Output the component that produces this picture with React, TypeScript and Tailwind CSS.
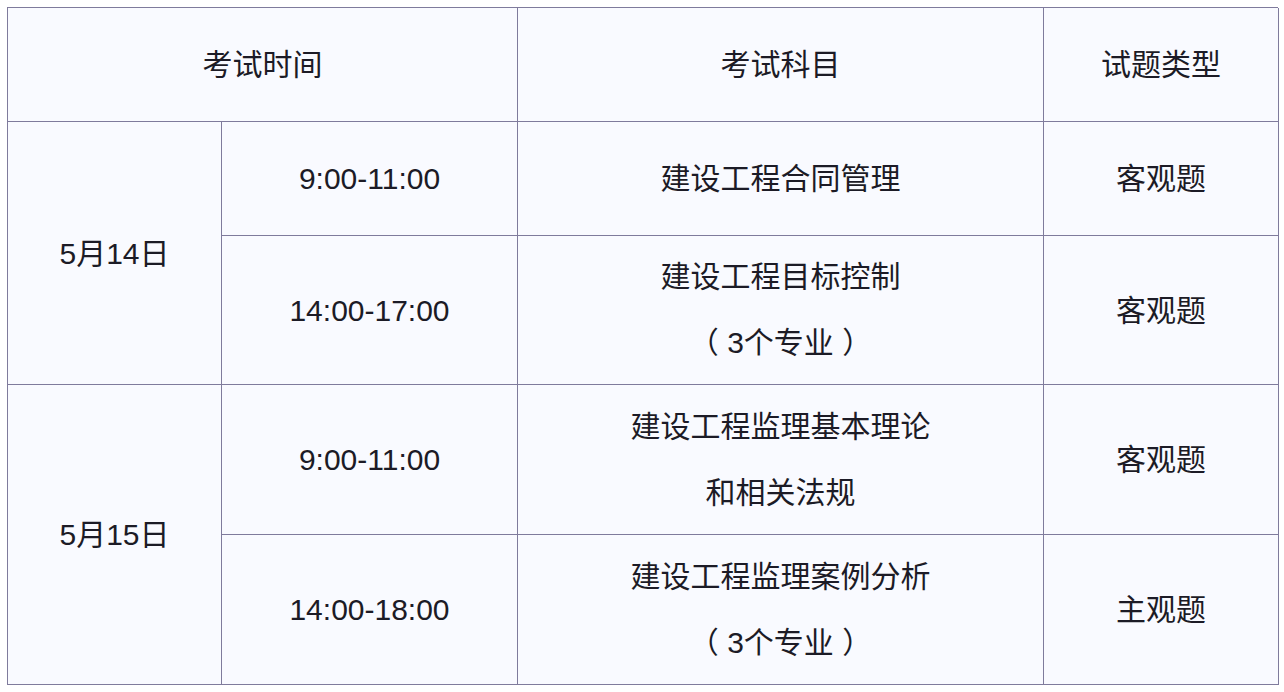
export default function App() {
  const cell =
    "flex flex-col items-center justify-center border-r border-b border-[#7f7b9c] text-center";
  return (
    <div
      lang="zh-CN"
      className="min-h-screen bg-white p-[7px] text-[30px] text-[#1c1b26]"
      style={{ fontFamily: '"Liberation Sans", "Noto Sans CJK SC", sans-serif' }}
    >
      <div className="grid w-[1271px] grid-cols-[214px_296px_526px_235px] grid-rows-[114px_114px_149px_150px_150px] border-l border-t border-[#7f7b9c] bg-[#f9faff]">
        <div className={`${cell} col-span-2`}>考试时间</div>
        <div className={cell}>考试科目</div>
        <div className={cell}>试题类型</div>

        <div className={`${cell} row-span-2`}>5月14日</div>
        <div className={cell}>9:00-11:00</div>
        <div className={cell}>建设工程合同管理</div>
        <div className={cell}>客观题</div>

        <div className={cell}>14:00-17:00</div>
        <div className={`${cell} leading-[66px]`}>
          <span>建设工程目标控制</span>
          <span>（ 3个专业 ）</span>
        </div>
        <div className={cell}>客观题</div>

        <div className={`${cell} row-span-2`}>5月15日</div>
        <div className={cell}>9:00-11:00</div>
        <div className={`${cell} leading-[66px]`}>
          <span>建设工程监理基本理论</span>
          <span>和相关法规</span>
        </div>
        <div className={cell}>客观题</div>

        <div className={cell}>14:00-18:00</div>
        <div className={`${cell} leading-[66px]`}>
          <span>建设工程监理案例分析</span>
          <span>（ 3个专业 ）</span>
        </div>
        <div className={cell}>主观题</div>
      </div>
    </div>
  );
}
